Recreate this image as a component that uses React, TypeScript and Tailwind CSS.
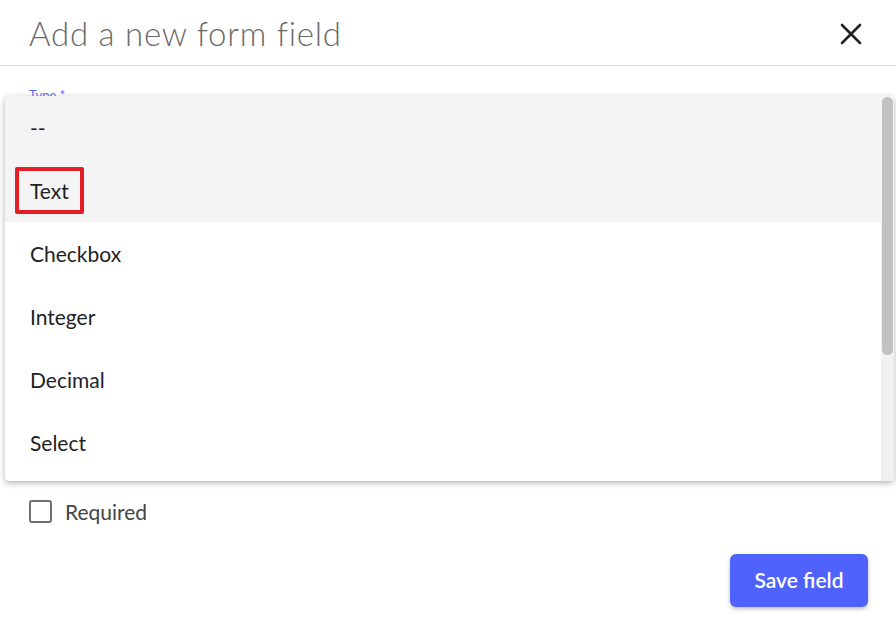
import { useState } from "react";

const OPTIONS = ["--", "Text", "Checkbox", "Integer", "Decimal", "Select"];

export default function App() {
  const [required, setRequired] = useState(false);

  return (
    <div className="relative h-[621px] w-[896px] overflow-hidden bg-white font-['Lato',sans-serif] text-[#1f1f1f]">
      {/* Header */}
      <div className="flex h-[66px] items-center justify-between border-b border-[#dcdcdc] pl-[29px] pr-[34px]">
        <h2 className="pt-[2px] text-[33px] font-light tracking-[0.75px] text-[#6b6b6b]">
          Add a new form field
        </h2>
        <svg width="22" height="22" viewBox="0 0 22 22" className="mt-[2px]">
          <path d="M2 2 L20 20 M20 2 L2 20" stroke="#222" strokeWidth="2.6" strokeLinecap="round" />
        </svg>
      </div>

      {/* Body */}
      <div className="px-[29px] pt-[22px]">
        <label className="block text-[13px] leading-[14px] text-[#5a6cff]">Type *</label>
        <div className="h-[380px]" />
        <label className="mt-[14px] flex items-center gap-[13px] text-[21px] text-[#444]">
          <span
            onClick={() => setRequired(!required)}
            className="h-[23px] w-[23px] rounded-[3px] border-2 border-[#707070]"
          />
          Required
        </label>
      </div>

      <div className="mt-[26px] flex justify-end pr-[28px]">
        <button className="h-[53px] w-[138px] rounded-[6px] bg-[#4f62fc] text-[21px] font-semibold text-white shadow-[0_2px_4px_rgba(0,0,0,0.25)]">
          Save field
        </button>
      </div>

      {/* Open dropdown menu */}
      <div className="absolute left-[5px] top-[96px] flex h-[385px] w-[889px] overflow-hidden rounded-[4px] bg-white shadow-[0_2px_6px_rgba(0,0,0,0.3)]">
        <ul className="flex-1">
          {OPTIONS.map((o, i) => (
            <li
              key={o}
              className={`flex h-[63px] items-center pl-[25px] text-[21px] text-[#1f1f1f] ${i < 2 ? "bg-[#f4f4f4]" : ""}`}
            >
              {o === "Text" ? (
                <span className="-ml-[15px] rounded-[2px] border-[4px] border-[#e31e24] px-[11px] py-[5px] leading-[29px]">
                  Text
                </span>
              ) : (
                o
              )}
            </li>
          ))}
        </ul>
        <div className="flex w-[13px] flex-col bg-[#f1f1f1]">
          <div className="mx-[1px] mt-[1px] h-[258px] rounded-full bg-[#c1c1c1]" />
        </div>
      </div>
    </div>
  );
}
